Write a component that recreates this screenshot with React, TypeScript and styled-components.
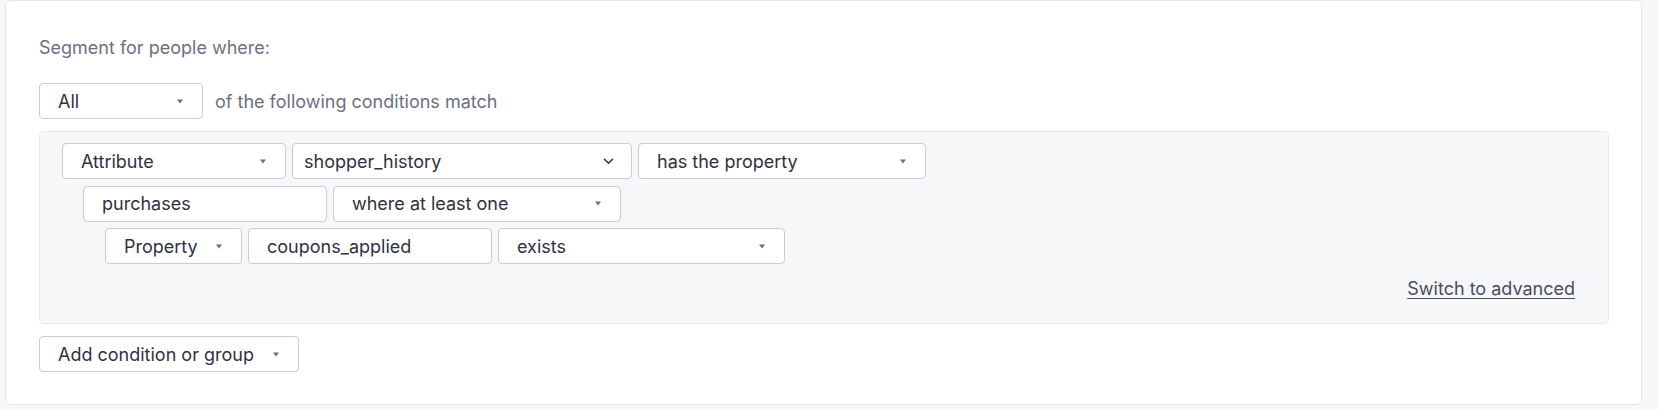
import React from "react"
import styled, { createGlobalStyle } from "styled-components"

const GlobalStyle = createGlobalStyle`
  html, body {
    margin: 0;
    padding: 0;
    background: #f6f7f9;
    font-family: Inter, "Noto Sans", "Liberation Sans", sans-serif;
    -webkit-font-smoothing: antialiased;
  }
`

const Page = styled.div`
  padding: 0 16px 5px 5px;
`

const Card = styled.div`
  background: #ffffff;
  border: 1px solid #e6e7ec;
  border-radius: 6px;
  padding: 35px 32px 32px 33px;
  height: 405px;
  box-sizing: border-box;
`

const Label = styled.div`
  font-size: 18px;
  line-height: 24px;
  color: #6c6f82;
`

const MatchRow = styled.div`
  display: flex;
  align-items: center;
  gap: 12px;
  margin-top: 23px;
`

const MatchText = styled.span`
  font-size: 18px;
  color: #6c6f82;
`

const Field = styled.div<{ $width: number; $native?: boolean }>`
  display: flex;
  align-items: center;
  justify-content: space-between;
  box-sizing: border-box;
  width: ${(p) => p.$width}px;
  height: 36px;
  flex: none;
  padding: 0 ${(p) => (p.$native ? 17 : 19)}px 0 ${(p) => (p.$native ? 11 : 18)}px;
  background: #ffffff;
  border: 1px solid #cacbd6;
  border-radius: 4px;
  font-size: 18px;
  color: #2f3142;
  white-space: nowrap;
`

const Panel = styled.div`
  margin-top: 12px;
  background: #f6f7f9;
  border: 1px solid #e8e9ee;
  border-radius: 5px;
  padding: 11px 33px 22px 22px;
  height: 193px;
  box-sizing: border-box;
`

const Row = styled.div<{ $indent: number }>`
  display: flex;
  gap: 6px;
  margin-left: ${(p) => p.$indent}px;
  & + & {
    margin-top: 6.7px;
  }
`

const Footer = styled.div`
  display: flex;
  justify-content: flex-end;
  margin-top: 13px;
`

const AdvancedLink = styled.a`
  font-size: 18px;
  line-height: 24px;
  color: #4a4c60;
  text-decoration: underline;
  text-underline-offset: 3px;
  text-decoration-thickness: 1px;
  cursor: pointer;
`

const AddRow = styled.div`
  margin-top: 12px;
`

const Caret = () => (
  <svg width="6" height="5" viewBox="0 0 6 5">
    <polygon points="0,0.5 6,0.5 3,4.5" fill="#6a6d7e" />
  </svg>
)

const Chevron = () => (
  <svg width="11" height="7" viewBox="0 0 11 7">
    <path d="M1.5 1.3l4 4 4-4" fill="none" stroke="#2f3142" strokeWidth="1.5" strokeLinecap="round" strokeLinejoin="round" />
  </svg>
)

type SelectProps = { width: number; children: React.ReactNode; native?: boolean }

const Select = ({ width, children, native }: SelectProps) => (
  <Field $width={width} $native={native}>
    <span>{children}</span>
    {native ? <Chevron /> : <Caret />}
  </Field>
)

const Input = ({ width, children }: { width: number; children: React.ReactNode }) => (
  <Field $width={width}>
    <span>{children}</span>
  </Field>
)

export default function App() {
  return (
    <Page>
      <GlobalStyle />
      <Card>
        <Label>Segment for people where:</Label>
        <MatchRow>
          <Select width={164}>All</Select>
          <MatchText>of the following conditions match</MatchText>
        </MatchRow>
        <Panel>
          <Row $indent={0}>
            <Select width={224}>Attribute</Select>
            <Select width={340} native>shopper_history</Select>
            <Select width={288}>has the property</Select>
          </Row>
          <Row $indent={21}>
            <Input width={244}>purchases</Input>
            <Select width={288}>where at least one</Select>
          </Row>
          <Row $indent={43}>
            <Select width={137}>Property</Select>
            <Input width={244}>coupons_applied</Input>
            <Select width={287}>exists</Select>
          </Row>
          <Footer>
            <AdvancedLink>Switch to advanced</AdvancedLink>
          </Footer>
        </Panel>
        <AddRow>
          <Select width={260}>Add condition or group</Select>
        </AddRow>
      </Card>
    </Page>
  )
}
